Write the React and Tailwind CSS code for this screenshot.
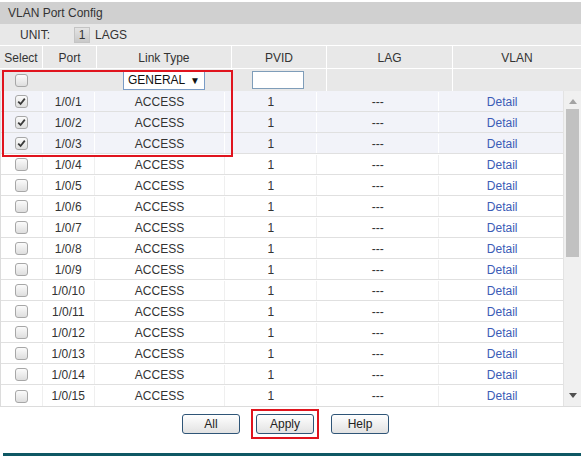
import React from 'react'

const cols = 'grid grid-cols-[7.4%_9.3%_23.2%_16.4%_21.7%_22%]'

const ports = Array.from({ length: 15 }, (_, i) => `1/0/${i + 1}`)

function Checkbox({ checked }) {
  return (
    <span className="flex h-[13px] w-[13px] items-center justify-center rounded-[3px] border border-[#a7a7a7] bg-gradient-to-b from-[#fbfbfb] to-[#dedede]">
      {checked && (
        <svg width="9" height="9" viewBox="0 0 9 9">
          <path d="M1.2 4.6 L3.6 7 L7.8 1.6" stroke="#3a3a3a" strokeWidth="1.8" fill="none" />
        </svg>
      )}
    </span>
  )
}

function Button({ children }) {
  return (
    <button className="h-[20px] w-[58px] rounded-[3px] border border-[#2f5577] bg-gradient-to-b from-white to-[#e2e2e2] text-[12px] text-[#222]">
      {children}
    </button>
  )
}

export default function App() {
  return (
    <div className="w-[584px] h-[459px] bg-white pt-[2px] text-[12px] text-[#333]" style={{ fontFamily: '"Liberation Sans", Arial, sans-serif' }}>
      <div className="relative w-[581px]">
        {/* Title */}
        <div className="flex h-[22px] items-center bg-[#d0d0d0] pl-[8px] text-[#333]">VLAN Port Config</div>

        {/* Unit row */}
        <div className="flex h-[22px] items-center border-b border-white bg-[#e8e8e8] pl-[20px]">
          <span>UNIT:</span>
          <span className="ml-[24px] flex h-[16px] w-[16px] items-center justify-center border border-[#c4c4c4] bg-gradient-to-b from-[#e4e4e4] to-[#c9c9c9] text-[#333]">1</span>
          <span className="ml-[5px]">LAGS</span>
        </div>

        {/* Header */}
        <div className={`${cols} h-[23px] border-b border-white bg-[#e8e8e8] text-center`}>
          {['Select', 'Port', 'Link Type', 'PVID', 'LAG', 'VLAN'].map((h, i) => (
            <div key={h} className={`flex items-center justify-center pt-[1px] ${i < 5 ? 'border-r border-white' : ''}`}>{h}</div>
          ))}
        </div>

        {/* Filter row */}
        <div className={`${cols} h-[22px] bg-[#e8e8e8]`}>
          <div className="flex items-center justify-center"><Checkbox /></div>
          <div />
          <div className="flex items-center justify-center border-r border-white">
            <div className="flex h-[19px] w-[82px] items-center justify-between border border-[#7a9cc6] bg-white pl-[4px] pr-[4px] text-[#111]">
              <span>GENERAL</span>
              <span className="text-[10px]">▼</span>
            </div>
          </div>
          <div className="flex items-center justify-center border-r border-white">
            <div className="ml-[-1px] h-[18px] w-[52px] border border-[#7f9db9] bg-white" />
          </div>
          <div className="border-r border-white" />
          <div />
        </div>

        {/* Data rows with scrollbar */}
        <div className="flex border-b border-l border-[#dcdcdc]">
          <div className="w-[562px]">
            {ports.map((p, i) => {
              const sel = i < 3
              const line = sel ? 'border-r border-white' : 'border-r border-[#efefef]'
              return (
                <div key={p} className={`${cols} h-[21px] border-b border-[#e0e0e0] pt-[1px] text-center ${sel ? 'bg-[#f2f3f9]' : 'bg-white'} ${i === 14 ? 'border-b-0' : ''}`}>
                  <div className={`flex items-center justify-center ${line}`}><Checkbox checked={sel} /></div>
                  <div className={`flex items-center justify-center ${line}`}>{p}</div>
                  <div className={`flex items-center justify-center ${line}`}>ACCESS</div>
                  <div className={`flex items-center justify-center ${line}`}>1</div>
                  <div className={`flex items-center justify-center ${line}`}>---</div>
                  <div className="flex items-center justify-center pl-[2px] text-[#3b5cb6]">Detail</div>
                </div>
              )
            })}
          </div>
          <div className="relative w-[18px] border-l border-[#e3e3e3] bg-[#f0f0f0]">
            <svg className="absolute left-[5px] top-[8px]" width="8" height="5" viewBox="0 0 8 5">
              <path d="M0 5 L4 0 L8 5 Z" fill="#a3a3a3" />
            </svg>
            <div className="absolute left-[2px] top-[18px] h-[148px] w-[13px] bg-[#c1c1c1]" />
            <svg className="absolute left-[5px] bottom-[8px]" width="8" height="5" viewBox="0 0 8 5">
              <path d="M0 0 L8 0 L4 5 Z" fill="#505050" />
            </svg>
          </div>
        </div>

        {/* Buttons */}
        <div className="flex h-[46px] items-start pl-[182px] pt-[2px]">
          <div className="mt-[5px]"><Button>All</Button></div>
          <div className="ml-[11px] border-2 border-[#e0141e] p-[3px]">
            <Button>Apply</Button>
          </div>
          <div className="ml-[12px] mt-[5px]"><Button>Help</Button></div>
        </div>

        <div className="ml-[3px] h-[3px] bg-[#0e5864]" />

        {/* Annotation highlight */}
        <div className="pointer-events-none absolute left-[2px] top-[68px] h-[87px] w-[231px] border-2 border-[#e0141e]" />
      </div>
    </div>
  )
}
